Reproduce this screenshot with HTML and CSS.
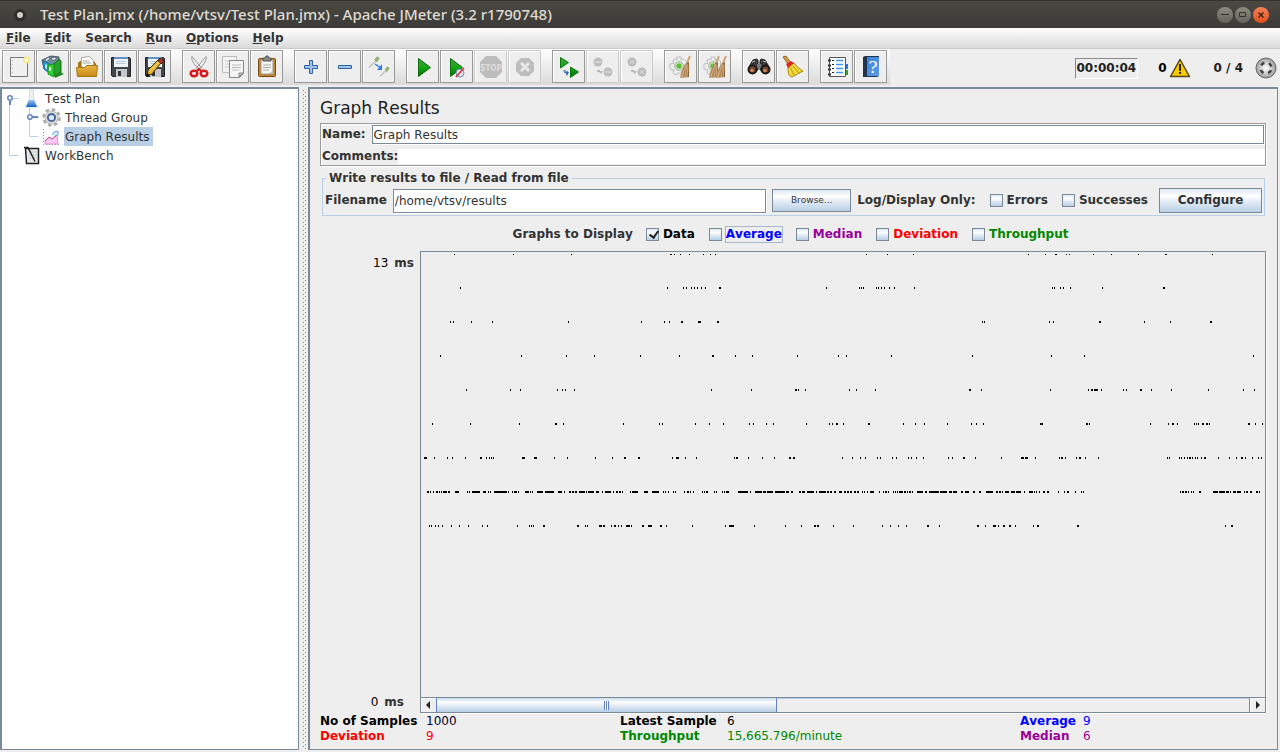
FILE: index.html
```html
<!DOCTYPE html>
<html lang="en">
<head>
<meta charset="utf-8">
<title>Test Plan.jmx - Apache JMeter</title>
<link rel="stylesheet" href="styles.css">
</head>
<body>
<svg class="defs" aria-hidden="true">
  <defs>
    <linearGradient id="green" x1="0" y1="0" x2="0" y2="1"><stop offset="0" stop-color="#4f9a4f"/><stop offset=".5" stop-color="#12a812"/><stop offset="1" stop-color="#0a6a0a"/></linearGradient>
    <linearGradient id="folder" x1="0" y1="0" x2="0" y2="1"><stop offset="0" stop-color="#e9b546"/><stop offset="1" stop-color="#c98a14"/></linearGradient>
    <linearGradient id="flaskfill" x1="0" y1="0" x2="0" y2="1"><stop offset="0" stop-color="#9cc4ee"/><stop offset="1" stop-color="#1464c8"/></linearGradient>
    <radialGradient id="orb"><stop offset="0" stop-color="#fff"/><stop offset=".6" stop-color="#c8c8c8"/><stop offset="1" stop-color="#9a9a9a"/></radialGradient>
    <linearGradient id="book" x1="0" y1="0" x2="1" y2="1"><stop offset="0" stop-color="#3f83d6"/><stop offset="1" stop-color="#5c9be6"/></linearGradient>
    <linearGradient id="broomfill" x1="0" y1="0" x2="1" y2="0"><stop offset="0" stop-color="#c9a070"/><stop offset="1" stop-color="#8a6238"/></linearGradient>
    <pattern id="bumps" width="4" height="4" patternUnits="userSpaceOnUse"><path d="M0 0h1v1H0zM2 2h1v1H2z" fill="#7a8a99"/><path d="M1 1h1v1H1zM3 3h1v1H3z" fill="#fff"/></pattern>
    <symbol id="i-floppy" viewBox="0 0 24 24"><path d="M2.500 2.500h18l1 1v18H3.500l-1-1z" fill="#42464a" stroke="#222"/><path d="M5 2h14v10H5z" fill="#eef3f8"/><path d="M5 2h14v2H5z" fill="#5f92c8"/><path d="M7 6.500h10M7 8.500h10" stroke="#b8c8d8"/><path d="M7 14h11v8H7z" fill="#c4c8cc"/><path d="M9 16h3v5H9z" fill="#33373b"/></symbol>
    <symbol id="i-gearbroom" viewBox="0 0 24 24"><path d="M8 2h4v3l3-1 3 3-1 2h3v5l-3 1v3l-4 2-3-2-4 2-2-3 1-2-4-1V9l4-1-1-3 3-1 1 1z" fill="#eceeec" stroke="#b9bdbf"/><circle cx="10" cy="11" r="4.500" fill="#c4dcb4" stroke="#b5b9b5"/><circle cx="10" cy="11" r="2.500" fill="#5cbf2f"/></symbol>
    <symbol id="i-whisk" viewBox="0 0 12 24"><path d="M11 1L8 8" stroke="#d0a67c" stroke-width="2"/><path d="M6 9l4-2v15l-9 1 1-6z" fill="url(#broomfill)"/><path d="M7 9L3 22M8 9L6 22M9 10l-1 12" stroke="#dcb98c" stroke-width=".8"/></symbol>
    <symbol id="i-dropper" viewBox="0 0 14 14"><path d="M2 12l7-7 1 1-7 6-2 1z" fill="#eef3ea" stroke="#b3bbb0"/><path d="M8 4l3-3 2 2-3 4z" fill="#8abb5c" stroke="#84a26e"/></symbol>
  </defs>
</svg>
<div class="window">
  <header class="titlebar">
    <svg class="titleicon" width="14" height="14"><circle cx="7" cy="7" r="6" fill="#2e2d2a"/><circle cx="7" cy="7" r="3" fill="#d2d0cb"/></svg>
    <h1 class="wintitle">Test Plan.jmx (/home/vtsv/Test Plan.jmx) - Apache JMeter (3.2 r1790748)</h1>
    <div class="winbuttons">
      <button class="winbtn" aria-label="Minimize"><svg width="16" height="16"><path d="M4 7.500h8" stroke="#33322e"/></svg></button>
      <button class="winbtn" aria-label="Maximize"><svg width="16" height="16"><path d="M4.500 5.500h6v4h-6z" fill="none" stroke="#33322e"/></svg></button>
      <button class="winbtn close" aria-label="Close"><svg width="16" height="16"><path d="M5.500 5.500l5 5m0-5l-5 5" stroke="#33220e" stroke-width="1.300"/></svg></button>
    </div>
  </header>
  <nav class="menubar">
    <button class="menu"><u>F</u>ile</button>
    <button class="menu"><u>E</u>dit</button>
    <button class="menu">Search</button>
    <button class="menu"><u>R</u>un</button>
    <button class="menu"><u>O</u>ptions</button>
    <button class="menu"><u>H</u>elp</button>
  </nav>
  <div class="topbar">
    <div class="toolbar" role="toolbar">
      <div class="group">
        <button class="tool" aria-label="New"><svg width="24" height="24"><path d="M3.500 2.500h17v19h-17z" fill="#f0f0f0" stroke="#777"/><path d="M5.500 5v14" stroke="#bbb" stroke-dasharray="1 3"/><circle cx="19.500" cy="5" r="3.500" fill="#f4ec8a"/><circle cx="19.500" cy="5" r="1.500" fill="#fff"/></svg></button>
        <button class="tool" aria-label="Templates"><svg width="24" height="24"><path d="M1 5l9-4 8 1v10l-9 5-6-3z" fill="#6d8e98" stroke="#3b5c68"/><path d="M4 4l4-2 1 2-4 3zM10 3l4-1 2 1-4 3z" fill="#dce6e8" stroke="#667"/><path d="M2 6l7 3v9l-5-3z" fill="#2ba0dc" stroke="#1b70b0"/><path d="M4 9l2 1v4l-2-1z" fill="#bfe6f8"/><path d="M13 9l5-5 2 2v12l-7 3z" fill="#27a22a" stroke="#176a1c"/><path d="M7 10l6-1v13l-6-3z" fill="#30d030" stroke="#119a11"/><path d="M19 17l4 2-9 4v-3z" fill="#23852a"/><path d="M9 12v4" stroke="#e2fae2" stroke-width="2"/></svg></button>
        <button class="tool" aria-label="Open"><svg width="24" height="24"><path d="M3 8l2-2h14l2 3v11H3z" fill="#a87414"/><path d="M6.500 2.500l8-1 4 4v8h-12z" fill="#fafafa" stroke="#aaa"/><path d="M8 6h6M8 8h8" stroke="#aaa"/><path d="M1.500 12.500h8l2-2h11l-1 11h-19z" fill="url(#folder)" stroke="#a87414"/></svg></button>
        <button class="tool" aria-label="Save"><svg width="24" height="24"><use href="#i-floppy"/></svg></button>
        <button class="tool" aria-label="Save as"><svg width="24" height="24"><use href="#i-floppy"/><path d="M4 21l1-6L15 5l3 3L9 19z" fill="#e8b22c" stroke="#3a2a10"/><path d="M6 17L16 7" stroke="#fae08a"/><path d="M15 5l2-2 4 3-3 3z" fill="#b8322e" stroke="#4a1a10"/><path d="M3 22l1-4 3 2z" fill="#111"/></svg></button>
      </div>
      <div class="group">
        <button class="tool" aria-label="Cut"><svg width="24" height="24"><path d="M5 1.500c-1 3 1 7 8 14l2-2zM19 1.500c1 3-1 7-8 14l-2-2z" fill="#eee" stroke="#999"/><ellipse cx="7" cy="18.500" rx="3.300" ry="2.700" fill="none" stroke="#d8191c" stroke-width="2.500"/><ellipse cx="17" cy="18.500" rx="3.300" ry="2.700" fill="none" stroke="#d8191c" stroke-width="2.500"/><path d="M9 17l3-3 3 3" fill="none" stroke="#d8191c" stroke-width="2"/></svg></button>
        <button class="tool" aria-label="Copy"><svg width="24" height="24"><path d="M1.500 1.500h14v16h-14z" fill="#f3f3f3" stroke="#bbb"/><path d="M4 6h9M4 9h9M4 12h9" stroke="#ccc"/><path d="M8.500 5.500h14v13l-4 4h-10z" fill="#f5f5f5" stroke="#888"/><path d="M11 10h9M11 12.500h9M11 15h7" stroke="#bbb"/><path d="M22 18l-4 4v-4z" fill="#ccc" stroke="#888"/></svg></button>
        <button class="tool" aria-label="Paste"><svg width="24" height="24"><rect x="3.500" y="3.500" width="17" height="18" rx="1" fill="#c5852a" stroke="#7a4a0c"/><path d="M6 5h12v14H6z" fill="#f7f7f7" stroke="#999"/><path d="M8 10h8M8 12.500h8M8 15h6" stroke="#aaa"/><path d="M18 15v4h-4z" fill="#bbb"/><path d="M8 6V3h2l1-2h2l1 2h2v3z" fill="#888d88" stroke="#555"/></svg></button>
      </div>
      <div class="group">
        <button class="tool" aria-label="Expand all"><svg width="24" height="24"><path d="M10.500 5.500h3v5h5v3h-5v5h-3v-5h-5v-3h5z" fill="#9cc3ea" stroke="#2f63a5"/></svg></button>
        <button class="tool" aria-label="Collapse all"><svg width="24" height="24"><path d="M5.500 10.500h13v3h-13z" fill="#9cc3ea" stroke="#2f63a5"/></svg></button>
        <button class="tool" aria-label="Toggle"><svg width="24" height="24"><use href="#i-dropper" x="1" y="1" width="12" height="12"/><use href="#i-dropper" x="12" y="11" width="11" height="11"/><path d="M8 9l6 4" stroke="#2d7fe8" stroke-width="1.500"/><path d="M15 9v6H10z" fill="#2d7fe8"/></svg></button>
      </div>
      <div class="group">
        <button class="tool" aria-label="Start"><svg width="24" height="24"><path d="M7.500 3.500l12 9-12 9z" fill="url(#green)" stroke="#0b6d0b"/></svg></button>
        <button class="tool" aria-label="Start no pauses"><svg width="24" height="24"><path d="M5.500 3.500l12 9-12 9z" fill="url(#green)" stroke="#0b6d0b"/><circle cx="15" cy="18" r="4" fill="#dce6f2" stroke="#6d8cb0"/><path d="M11 22l8-9" stroke="#e03030" stroke-width="1.500"/></svg></button>
        <button class="tool" disabled aria-label="Stop"><svg width="24" height="24"><path d="M7 1h10l6 6v10l-6 6H7l-6-6V7z" fill="#bcbcbc"/><text class="stoptext" x="12" y="16" text-anchor="middle">STOP</text></svg></button>
        <button class="tool" disabled aria-label="Shutdown"><svg width="24" height="24"><path d="M8 3h8l5 5v8l-5 5H8l-5-5V8z" fill="#bdbdbd"/><path d="M8 8l8 8m0-8l-8 8" stroke="#e8e8e8" stroke-width="3"/></svg></button>
      </div>
      <div class="group">
        <button class="tool" aria-label="Remote start all"><svg width="24" height="24"><path d="M3.500 2.500l8 5-8 5.500zM13.500 12l8 5-8 5.500z" fill="url(#green)" stroke="#0b7d0b"/><path d="M6 15h3v1h2v2h-4z" fill="#7a9ccb"/><path d="M8 17h4l-2 4z" fill="#3d68ad"/></svg></button>
        <button class="tool" disabled aria-label="Remote stop all"><svg width="24" height="24"><circle cx="7" cy="7" r="4.500" fill="#bdbdbd"/><circle cx="17" cy="17" r="4.500" fill="#bdbdbd"/><path d="M4 7h6M14 17h6" stroke="#d4d4d4" stroke-width="2"/><path d="M6 15h3v1h3l-2 3-2-2H6z" fill="#b9b9b9"/></svg></button>
        <button class="tool" disabled aria-label="Remote shutdown all"><svg width="24" height="24"><circle cx="7" cy="7" r="4.500" fill="#bdbdbd"/><circle cx="17" cy="17" r="4.500" fill="#bdbdbd"/><path d="M5 5l4 4m0-4l-4 4M15 15l4 4m0-4l-4 4" stroke="#dcdcdc"/><path d="M6 15h3v1h3l-2 3-2-2H6z" fill="#b9b9b9"/></svg></button>
      </div>
      <div class="group">
        <button class="tool" aria-label="Clear"><svg width="24" height="24"><use href="#i-gearbroom"/><use href="#i-whisk" x="10" y="0" width="12" height="24"/></svg></button>
        <button class="tool" aria-label="Clear all"><svg width="24" height="24"><use href="#i-gearbroom"/><use href="#i-whisk" x="5" y="0" width="12" height="24"/><use href="#i-whisk" x="12" y="0" width="12" height="24"/></svg></button>
      </div>
      <div class="group">
        <button class="tool" aria-label="Search"><svg width="24" height="24"><path d="M6 5l4-1 1 2v9H2l1-5zM18 5l-4-1-1 2v9h9l-1-5z" fill="#3c3c3c" stroke="#1d1d1d"/><path d="M10 9h4v4h-4z" fill="#777"/><path d="M5 7l3-1M16 6l3 1" stroke="#bbb"/><circle cx="5.500" cy="14.500" r="4" fill="#75482e" stroke="#1b1b1b" stroke-width="2"/><circle cx="18.500" cy="14.500" r="4" fill="#75482e" stroke="#1b1b1b" stroke-width="2"/><circle cx="5" cy="15.500" r="1.800" fill="#c88258"/><circle cx="18" cy="15.500" r="1.800" fill="#c88258"/></svg></button>
        <button class="tool" aria-label="Reset search"><svg width="24" height="24"><path d="M2 2l3-1 5 7-3 1z" fill="#d39c4c" stroke="#9a6520"/><path d="M7 12l6-4c3 4 6 6 9 8l-11 6c-4-1-4-5-4-10z" fill="#f1d838" stroke="#a88a14"/><path d="M9 12l4 8M12 11l6 7" stroke="#b89b18"/><path d="M5 9l5-3 3 2-6 5z" fill="#d62626"/></svg></button>
      </div>
      <div class="group">
        <button class="tool" aria-label="Function helper"><svg width="24" height="24"><path d="M20 9h3v5h-3z" fill="#2d77d8"/><path d="M20 15h3v5h-3z" fill="#2aa52a"/><path d="M4.500 2.500h16v19h-16z" fill="#fff" stroke="#555"/><path d="M7 5.500h2M7 9.500h2M7 13.500h2M7 17.500h2" stroke="#222"/><path d="M11 5.500h7M11 9.500h7M11 13.500h7M11 17.500h7" stroke="#3f96f0" stroke-width="1.500"/><path d="M3 5.500h3M3 10.500h3M3 14.500h3M3 19.500h3" stroke="#333" stroke-width="2"/></svg></button>
        <button class="tool" aria-label="Help"><svg width="24" height="24"><path d="M4 2l2-1h14v20l-2 1H4z" fill="#20344e"/><path d="M8 2h12v19H8z" fill="url(#book)"/><text class="helptext" x="14" y="18" text-anchor="middle">?</text></svg></button>
      </div>
    </div>
    <div class="status">
      <output class="timer">00:00:04</output>
      <span class="errors">0 <svg width="22" height="20"><path d="M11 1.500L20.500 18.500h-19z" fill="#f6cb00" stroke="#54461a" stroke-width="1.500" stroke-linejoin="round"/><path d="M11 6v7M11 14v2" stroke="#2a2200" stroke-width="2"/></svg></span>
      <span class="threads">0 / 4</span>
      <svg width="22" height="22"><circle cx="11" cy="11" r="10" fill="url(#orb)" stroke="#666"/><circle cx="11" cy="11" r="5.500" fill="none" stroke="#444" stroke-width="2.500" stroke-dasharray="4 4.640" stroke-dashoffset="-2.300"/></svg>
    </div>
  </div>
  <div class="split">
    <aside class="tree">
      <div class="row">
        <svg width="20" height="19"><path d="M8 9.500h9M7.500 12v7" stroke="#b8cfe5"/><circle cx="8" cy="9" r="2.200" fill="#fff" stroke="#6382bf" stroke-width="1.500"/><path d="M8 12v4" stroke="#6382bf" stroke-width="2"/></svg>
        <svg width="20" height="19"><path d="M7.500 1h4v8l3.500 9H4l3.500-9z" fill="#eef1f5" stroke="#d3dae2"/><path d="M7 11h5l3 7H4z" fill="url(#flaskfill)"/></svg>
        <span class="node">Test Plan</span>
      </div>
      <div class="row">
        <svg width="40" height="19"><path d="M7.500 0v19M27.500 0v19M28 9.500h9" stroke="#b8cfe5"/><circle cx="28" cy="9" r="2.200" fill="#fff" stroke="#6382bf" stroke-width="1.500"/><path d="M31 9h5" stroke="#6382bf" stroke-width="2"/></svg>
        <svg width="20" height="19"><circle cx="9.500" cy="9.500" r="8" fill="none" stroke="#a8a8a8" stroke-width="2.500" stroke-dasharray="3.500 2.780"/><circle cx="9.500" cy="9.500" r="6.500" fill="#dedede" stroke="#b6b6b6"/><circle cx="9.500" cy="9.500" r="3.600" fill="#d9e7f6" stroke="#4a6a98" stroke-width="2"/></svg>
        <span class="node">Thread Group</span>
      </div>
      <div class="row">
        <svg width="40" height="19"><path d="M7.500 0v19M27.500 0v9.500h9" fill="none" stroke="#b8cfe5"/></svg>
        <svg width="20" height="19"><path d="M1.500 2v15.500H17" fill="none" stroke="#8a8a8a" stroke-dasharray="1 2"/><path d="M3 15l4-5 3 2 5-4 1 9H3z" fill="#f8c8f0" stroke="#e48fd8"/><path d="M3 14l4-4 3 2 5-4" fill="none" stroke="#c84f90"/><path d="M10 8l2-3 4-1v4l-3 1" fill="#d9ecfa" stroke="#66a4d8"/></svg>
        <span class="node selected">Graph Results</span>
      </div>
      <div class="row">
        <svg width="20" height="19"><path d="M7.500 0v9.500h9" fill="none" stroke="#b8cfe5"/></svg>
        <svg width="20" height="19"><path d="M3.500 2.500h13v15h-12z" fill="#e4e8ea" stroke="#222" stroke-width="1.500"/><path d="M7 6h8M7 9h8M7 12h8" stroke="#ccc"/><path d="M2 1.500h4l7 14" fill="none" stroke="#222" stroke-width="1.500"/></svg>
        <span class="node">WorkBench</span>
      </div>
    </aside>
    <div class="divider"><svg width="4" height="100%"><rect width="4" height="100%" fill="url(#bumps)"/></svg></div>
    <main class="panel">
      <h2 class="heading">Graph Results</h2>
      <div class="namebox">
        <div class="namerow"><label for="name">Name:</label><input id="name" class="field" type="text" value="Graph Results"></div>
        <div class="commentrow"><label for="comments">Comments:</label><input id="comments" class="plain" type="text"></div>
      </div>
      <fieldset class="filebox">
        <legend>Write results to file / Read from file</legend>
        <div class="filerow">
          <label for="filename">Filename</label>
          <input id="filename" class="field filename" type="text" value="/home/vtsv/results">
          <button class="btn browse">Browse...</button>
          <span>Log/Display Only:</span>
          <label class="check"><input type="checkbox">Errors</label>
          <label class="check"><input type="checkbox">Successes</label>
          <button class="btn configure">Configure</button>
        </div>
      </fieldset>
      <div class="series">
        <span>Graphs to Display</span>
        <label class="check black"><input type="checkbox" checked><span>Data</span></label>
        <label class="check blue"><input type="checkbox"><span class="focus">Average</span></label>
        <label class="check purple"><input type="checkbox"><span>Median</span></label>
        <label class="check red"><input type="checkbox"><span>Deviation</span></label>
        <label class="check green"><input type="checkbox"><span>Throughput</span></label>
      </div>
      <div class="graph">
        <div class="axis">
          <div class="tick"><span class="num">13</span>ms</div>
          <div class="tick low"><span class="num">0</span>ms</div>
        </div>
        <div class="scrollpane">
          <div class="plot"><svg id="plot" width="844" height="445" viewBox="1 12 844 445" shape-rendering="crispEdges"></svg></div>
          <div class="scrollbar">
            <button class="arrow" aria-label="Scroll left"><svg width="15" height="14"><path d="M9 3v8L5 7z" fill="#222"/></svg></button>
            <div class="track"><div class="thumb"><i></i></div></div>
            <button class="arrow right" aria-label="Scroll right"><svg width="15" height="14"><path d="M6 3v8l4-4z" fill="#222"/></svg></button>
          </div>
        </div>
      </div>
      <dl class="stats">
        <dt class="black">No of Samples</dt><dd class="navy">1000</dd>
        <dt class="black">Latest Sample</dt><dd class="black">6</dd>
        <dt class="blue">Average</dt><dd class="blue">9</dd>
        <dt class="red">Deviation</dt><dd class="red">9</dd>
        <dt class="green">Throughput</dt><dd class="green">15,665.796/minute</dd>
        <dt class="purple">Median</dt><dd class="purple">6</dd>
      </dl>
    </main>
  </div>
</div>
<script src="plot.js"></script>
</body>
</html>
```
FILE: styles.css
```css
* { box-sizing: border-box; }
body {
  margin: 0;
  font: bold 12px/15px "DejaVu Sans", sans-serif;
  font-kerning: none;
  color: #333;
  background: #eee;
}
button, input { font: inherit; font-kerning: none; color: inherit; margin: 0; }
svg { display: block; flex: none; }
.defs { position: absolute; width: 0; height: 0; }
.window { display: flex; flex-direction: column; height: 100vh; }

.titlebar {
  display: flex;
  align-items: center;
  height: 28px;
  padding: 0 11px 0 13px;
  background: linear-gradient(#4a4843, #3c3b37);
  border-top: 1px solid #33322e;
}
.wintitle {
  flex: 1;
  margin: 0 0 2px 13px;
  font: 500 15px/20px "Noto Sans", "Open Sans", sans-serif;
  color: #dfdbd2;
}
.winbuttons { display: flex; gap: 2px; }
.winbtn {
  width: 16px;
  height: 16px;
  padding: 0;
  border: 0;
  border-radius: 50%;
  background: linear-gradient(#8e8b82, #64625b);
}
.winbtn.close { background: linear-gradient(#f58058, #e2501c); }

.menubar {
  display: flex;
  height: 21px;
  gap: 14px;
  padding: 0 6px;
  background: linear-gradient(#fff, #dadada);
  border-bottom: 1px solid #ccc;
}
.menu { padding: 0; border: 0; background: none; line-height: 15px; }

.topbar { display: flex; height: 38px; }
.toolbar {
  display: flex;
  gap: 10px;
  padding: 1px 2px;
  background: linear-gradient(#fff, #dadada);
  border-bottom: 2px solid #eee;
}
.group { display: flex; gap: 1px; padding-right: 1px; }
.tool {
  display: flex;
  align-items: center;
  justify-content: center;
  width: 33px;
  height: 33px;
  padding: 0;
  border: 1px solid #999;
  background: #eee;
  box-shadow: inset 1px 1px #fff;
}
.tool:disabled { border-color: #ccc; }
.stoptext { font: bold 8px "DejaVu Sans Condensed", "DejaVu Sans", sans-serif; fill: #ddd; }
.helptext { font: 17px "DejaVu Serif", serif; fill: #fff; }
.status { display: flex; align-items: center; margin-left: auto; padding-right: 3px; color: #222; }
.timer {
  padding: 2px 1px;
  border: 1px solid;
  border-color: #888 #fff #fff #888;
}
.errors { display: flex; align-items: center; gap: 2px; margin-left: 20px; color: #000; }
.threads { margin: 0 12px 0 23px; }

.split { display: flex; flex: 1; min-height: 0; padding-bottom: 2px; }
.tree {
  width: 299px;
  border: 2px solid #7a8a99;
  border-right-width: 1px;
  border-bottom-width: 1px;
  box-shadow: inset -1px 0 #fff;
  background: #fff;
  font-weight: normal;
}
.row { display: flex; align-items: center; height: 19px; }
.node { margin-left: 2px; padding: 3px 3px 1px 1px; }
.node.selected { background: #b8cfe5; }
.divider { width: 9px; padding: 3px 2px 0 4px; overflow: hidden; }
.panel {
  display: flex;
  flex-direction: column;
  flex: 1;
  min-width: 0;
  margin-right: 2px;
  padding: 8px 11px 5px 10px;
  border: 2px solid #7a8a99;
  border-right-width: 1px;
  border-bottom-width: 1px;
}
.heading { margin: 0 0 4px; font: 17px/22px "DejaVu Sans", sans-serif; font-kerning: none; color: #222; }

.namebox { border: 1px solid #999; box-shadow: 1px 1px #fff, inset 1px 1px #fff; padding: 1px 1px 1px 1px; }
.namerow, .commentrow { display: flex; align-items: center; }
.namerow { gap: 6px; margin-bottom: 5px; }
.commentrow { margin-right: -1px; }
.field {
  flex: 1;
  height: 19px;
  padding: 0 1px;
  border: 1px solid #7a8a99;
  box-shadow: 1px 1px #fff;
  background: #fff;
  font-weight: normal;
}
.plain { flex: 1; height: 15px; padding: 0; border: 0; background: #fff; font-weight: normal; }

.filebox { margin: 5px 1px 0 2px; padding: 2px 2px 2px; border: 1px solid #b8cfe5; }
.filebox legend { padding: 0 3px; margin-left: 1px; }
.filerow { display: flex; align-items: center; gap: 6px; }
.filename { height: 24px; }
.btn {
  border: 1px solid #7a8a99;
  background: linear-gradient(#dde8f3, #fff 30%, #dde8f3 60%, #b8cfe5);
}
.browse { width: 79px; height: 23px; padding: 0; font-size: 9px; font-weight: normal; }
.configure { width: 103px; height: 25px; padding: 0; margin-left: 5px; }
.check { display: flex; align-items: center; gap: 4px; margin-left: 8px; }
.check input {
  appearance: none;
  width: 13px;
  height: 13px;
  border: 1px solid #7a8a99;
  background: linear-gradient(#dde8f3, #fff 30%, #dde8f3 60%, #b8cfe5);
}
.check input:checked::after {
  content: "";
  display: block;
  width: 4px;
  height: 7px;
  margin: 0 0 0 4px;
  border: solid #222;
  border-width: 0 2px 2px 0;
  transform: rotate(35deg);
}
.series { display: flex; align-items: center; justify-content: center; gap: 8px; height: 17px; margin: 10px 4px 8px 0; }
.series .check { margin-left: 5px; gap: 3px; }
.series .check span { padding: 0 1px; border: 1px solid transparent; border-width: 1px 0; }
.series .check .focus { outline: 1px solid #a3b8cc; outline-offset: -1px; }

.black { color: #000; }
.navy { color: #003; }
.blue { color: #00f; }
.purple { color: #909; }
.red { color: #f00; }
.green { color: #080; }

.graph { display: flex; flex: 1; min-height: 0; }
.axis { display: flex; flex-direction: column; justify-content: space-between; width: 100px; padding: 5px 6px 3px 0; }
.tick { text-align: right; }
.tick.low { padding-right: 10px; }
.num { margin-right: 6px; font-weight: normal; color: #000; }
.scrollpane { display: flex; flex-direction: column; flex: 1; min-width: 0; border: 1px solid #7a8a99; box-shadow: 1px 1px #fff; }
.plot { flex: 1; min-height: 0; overflow: hidden; }
.scrollbar { display: flex; height: 15px; border-top: 1px solid #7a8a99; }
.arrow { width: 15px; padding: 0; border: 0; background: #eee; box-shadow: inset 1px 1px #fff; }
.arrow.right { border-left: 1px solid #7a8a99; width: 16px; }
.track { flex: 1; box-shadow: inset 0 1px #b8cfe5; }
.thumb {
  display: flex;
  align-items: center;
  justify-content: center;
  width: 42%;
  height: 100%;
  border: 1px solid #6382bf;
  border-width: 0 1px;
  background: linear-gradient(#c8daeb, #fff 30%, #dde8f3 60%, #b8cfe5);
}
.thumb i { width: 5px; height: 9px; background: repeating-linear-gradient(90deg, #6382bf 0 1px, #fff 1px 2px); }

.stats {
  display: grid;
  grid-template-columns: 106px 194fr 107px 293fr 63px 183fr;
  margin: 1px 0 0;
}
.stats dt, .stats dd { margin: 0; }
.stats dd { font-weight: normal; }
```
FILE: plot.js
```javascript
// One entry per sample level: top edge, dot height, then dots as "x" or "x+width".
const levels = [
  [14, 1, "34 93 151 250+2 254 260 269 283 290 295 446 467 493 608 625 635+2 646 649 673 691 718 745+2 792"],
  [47, 2, "40 247 263 266 271 274 277 281 285 299+2 406 439 441 443 456 458 461 464 469 474 494 632 634 640 643 650 682 743+2"],
  [81, 2, "30 33 51 72 148 221 244 249 261+2 278+3 297+2 562 564 629 633 679+2 724 750 790+2"],
  [115, 2, "20 101 146 174 220 259 292+2 315 332 377 418 426 471 552 631 664 833"],
  [149, 2, "46 90 100 137 142 145 154 291 331 375+2 378 385 429 436 455 549+2 561 630 668 671+2 674+4 681 703 706 720+2 731 751 788 823 834"],
  [183, 2, "12 50 99 135+2 143 203 239 242 275 289 303 329 333 346 353 386 409 412 416+2 423 448+2 483 495 504 527 551 556 563 620+3 666+2 669 730 748 752+2 757 774 776 778 782+2 786+2 789 828+2 835 842"],
  [217, 2, "4+3 14 27 32 45 60+2 66 69 71 73 102+3 114+3 134 147 175 192 204+2 218+2 252 256+3 265 276 314 316+2 328 342 354 369+2 373+2 422 432 440 445 457 460 472 476 488 491 496 503 528 532 543+2 555 581 601+3 605+3 615 639 641+2 645 656 659+2 665 678 747 749 759 761 764 767 769+2 772 775 777 781 784+2 798 809 816 821+2 825 832 838 841"],
  [251, 2, "7+2 10 13 16+2 19 21 23+4 28+2 35+4 47 49 52+8 63+3 68 70 74+13 88 92 94+3 98 105+4 110 112 117+6 125+9 138+4 144 149+2 152+2 155+2 159+6 166 168+6 176+3 182 185+6 193 196+2 199+2 202 210 212+6 224+4 232+7 243 245 248 253 255 264 267+2 270 273 282 284 286+2 294 296 302 304 306+3 318+10 330 335+7 343+3 347+6 355+10 366+3 371+2 379+2 382+3 387+7 396 399+7 407+2 410+2 414+2 419+3 424+2 427+2 430+2 434+2 437+2 442 444 447 450+4 459 463 465+2 468 473 475 477 479+4 484+2 487 489+2 492 497+6 505+2 509+10 520+7 529+3 533+4 541+2 545+4 553+2 559+2 566+7 576+2 579+2 582 585+4 591+4 596+5 604 609+4 614 616 619 623+2 627+2 638 644 647+2 655 661 663 760 762+2 765+2 768 771 773 779+2 793+5 799+6 806+3 810 813+3 817+4 824 826+2 830+2 836+2 839"],
  [285, 2, "9 11 15 18 22 31 39 48 62 67 97 109 111 113 123+2 157+2 165 167 179+3 183+2 191 194+2 198 201 206+4 211 222+2 228+4 240+2 246 272 305 309+5 334 365 381 394+2 397+2 413 433 462 470 478 486 507+2 519 557+2 565 573+3 578 583+2 589+2 595 613 617+2 657+2 805 811+2"]
];

const plot = document.getElementById("plot");
for (const [top, height, dots] of levels) {
  const path = document.createElementNS("http://www.w3.org/2000/svg", "path");
  const d = dots.split(" ").map(dot => {
    const [x, width = 1] = dot.split("+");
    return `M${x} ${top}h${width}v${height}h-${width}z`;
  });
  path.setAttribute("d", d.join(""));
  plot.appendChild(path);
}
```
